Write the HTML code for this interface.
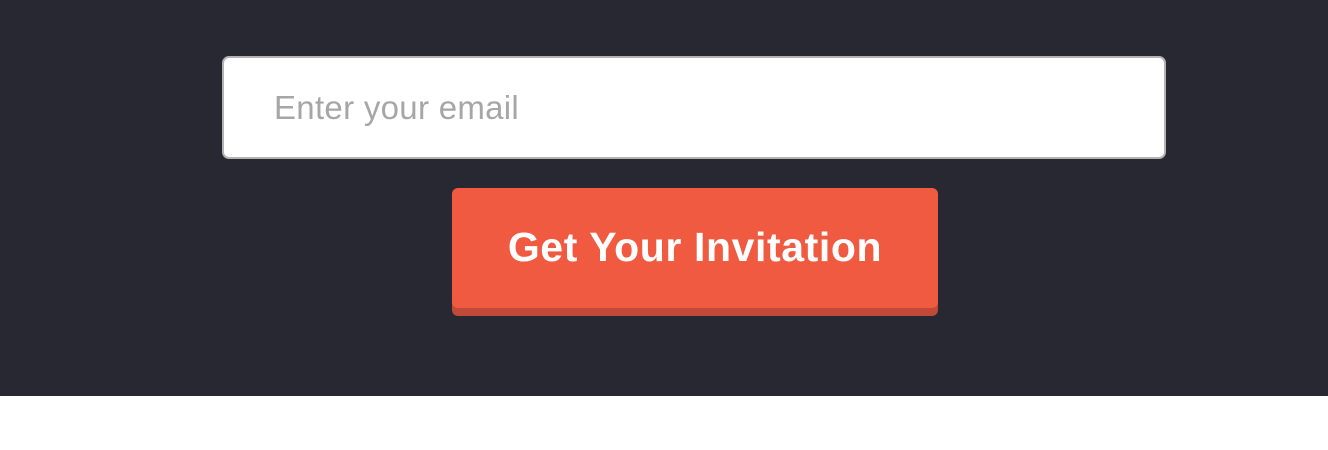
<!DOCTYPE html>
<html><head><style>
body{margin:0;width:1328px;height:450px;background:#fff;font-family:"Liberation Sans",sans-serif;overflow:hidden}
.bg{position:absolute;left:0;top:0;width:1328px;height:396px;background:#282833}
.in{position:absolute;left:222px;top:56px;width:940px;height:99px;background:#fff;border:2px solid #b3b3b6;border-radius:7px}
.in span{position:absolute;left:50px;top:31px;font-size:33px;letter-spacing:0.3px;color:#a6a6a6;line-height:38px}
.btn{position:absolute;left:452px;top:188px;width:486px;height:120px;background:#f05a40;border-radius:6px;box-shadow:0 8px 0 #c04937;color:#fff;font-weight:bold;font-size:41px;letter-spacing:0.6px;text-align:center;line-height:118px}
</style></head><body>
<div class="bg"></div>
<div class="in"><span>Enter your email</span></div>
<div class="btn">Get Your Invitation</div>
</body></html>
